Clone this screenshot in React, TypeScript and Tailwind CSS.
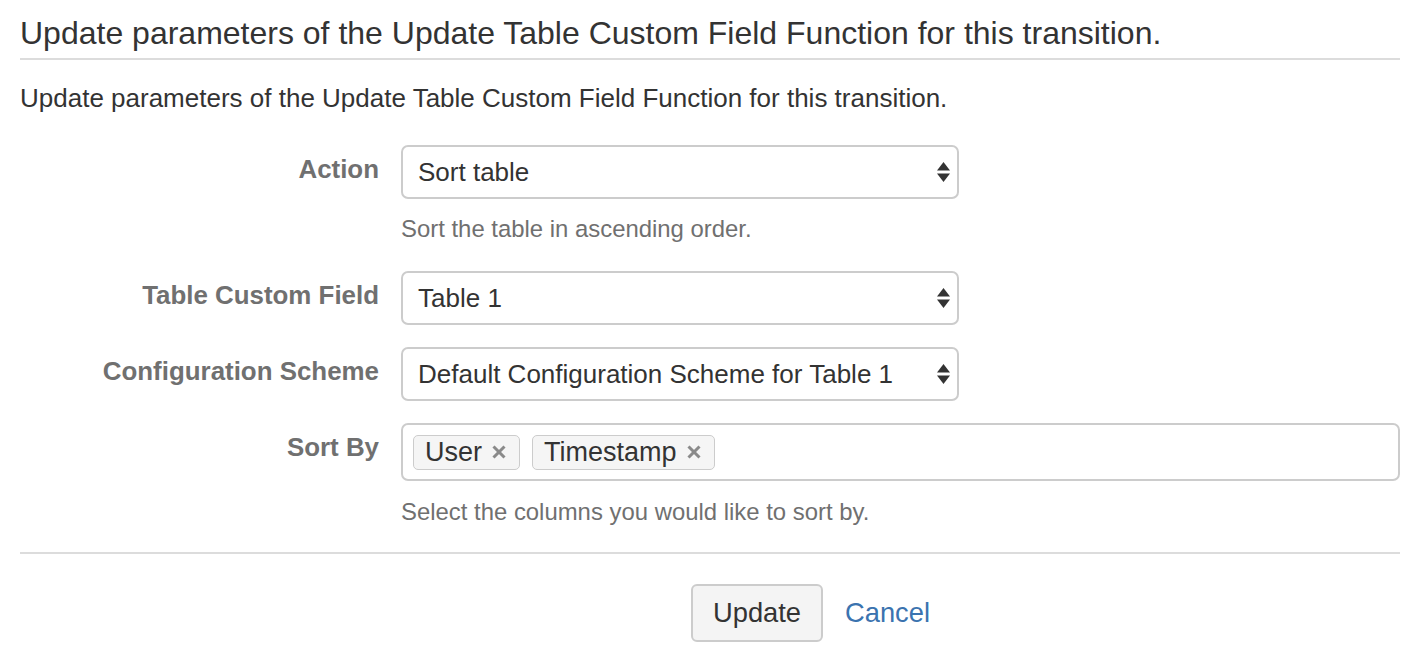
import React from "react";

function Arrows() {
  return (
    <svg width="13" height="20" viewBox="0 0 13 20" className="shrink-0">
      <polygon points="6.5,0 13,8.5 0,8.5" fill="#333" />
      <polygon points="0,11.5 13,11.5 6.5,20" fill="#333" />
    </svg>
  );
}

function Select({ value }: { value: string }) {
  return (
    <div className="w-[558px] h-[54px] border-2 border-[#cccccc] rounded-[7px] bg-white flex items-center justify-between pl-[15px] pr-[7px]">
      <span className="text-[26px] leading-[30px] text-[#333]">{value}</span>
      <Arrows />
    </div>
  );
}

function Tag({ label }: { label: string }) {
  return (
    <div className="h-[35px] flex items-center border-[1.5px] border-[#cccccc] rounded-[5px] bg-[#f5f5f5] pl-[11px] pr-[13px] gap-[10px]">
      <span className="text-[27px] leading-[32px] text-[#333]">{label}</span>
      <svg width="14" height="14" viewBox="0 0 14 14">
        <line x1="1.5" y1="1.5" x2="12.5" y2="12.5" stroke="#8a8a8a" strokeWidth="3" />
        <line x1="12.5" y1="1.5" x2="1.5" y2="12.5" stroke="#8a8a8a" strokeWidth="3" />
      </svg>
    </div>
  );
}

function Label({ text }: { text: string }) {
  return (
    <div className="w-[359px] shrink-0 text-right pt-[9px] text-[25.9px] leading-[30px] font-bold text-[#707070]">
      {text}
    </div>
  );
}

export default function App() {
  return (
    <div className="w-[1420px] h-[664px] bg-white px-[20px] font-['Liberation_Sans',Arial,sans-serif] overflow-hidden">
      <div className="pt-[14px] pb-[6px] border-b-2 border-[#dcdcdc]">
        <h2 className="text-[32px] leading-[38px] text-[#333] font-normal">
          Update parameters of the Update Table Custom Field Function for this transition.
        </h2>
      </div>
      <p className="mt-[23px] text-[26px] leading-[30px] text-[#333]">
        Update parameters of the Update Table Custom Field Function for this transition.
      </p>

      <div className="mt-[32px] flex flex-col">
        <div className="flex gap-[22px]">
          <Label text="Action" />
          <div className="flex flex-col">
            <Select value="Sort table" />
            <div className="mt-[15px] text-[23.9px] leading-[30px] text-[#707070]">
              Sort the table in ascending order.
            </div>
          </div>
        </div>

        <div className="mt-[27px] flex gap-[22px]">
          <Label text="Table Custom Field" />
          <Select value="Table 1" />
        </div>

        <div className="mt-[22px] flex gap-[22px]">
          <Label text="Configuration Scheme" />
          <Select value="Default Configuration Scheme for Table 1" />
        </div>

        <div className="mt-[22px] flex gap-[22px]">
          <Label text="Sort By" />
          <div className="flex flex-col flex-1">
            <div className="h-[58px] border-2 border-[#cccccc] rounded-[7px] bg-white flex items-center pl-[10px] gap-[12px]">
              <Tag label="User" />
              <Tag label="Timestamp" />
            </div>
            <div className="mt-[16px] text-[23.9px] leading-[30px] text-[#707070]">
              Select the columns you would like to sort by.
            </div>
          </div>
        </div>
      </div>

      <div className="mt-[25px] border-t-2 border-[#dcdcdc]" />

      <div className="mt-[30px] pl-[671px] flex items-center gap-[22px]">
        <button className="w-[132px] h-[58px] border-2 border-[#cccccc] rounded-[6px] bg-[#f4f4f4] text-[27.3px] leading-[32px] text-[#333]">
          Update
        </button>
        <a className="text-[27.3px] leading-[32px] text-[#3b73af] cursor-pointer">Cancel</a>
      </div>
    </div>
  );
}
